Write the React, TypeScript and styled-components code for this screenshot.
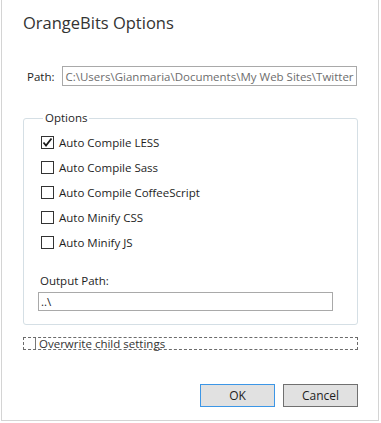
import styled, { createGlobalStyle } from "styled-components";

const GlobalStyle = createGlobalStyle`
  html, body {
    margin: 0;
    padding: 0;
    background: #ffffff;
  }
  body {
    font-family: "Open Sans", "Noto Sans", sans-serif;
    font-size: 11.5px;
    color: #1e1e1e;
  }
`;

const Window = styled.div`
  margin-left: 1px;
  width: 378px;
  height: 421px;
  box-sizing: border-box;
  border: 1px solid #d4d4d4;
  border-top: none;
  display: flex;
  flex-direction: column;
  padding: 0 20px 0 21px;
`;

const Title = styled.h1`
  margin: 11px 0 0 0;
  font-size: 16.5px;
  font-weight: 400;
  line-height: 24px;
  color: #333333;
`;

const PathRow = styled.div`
  display: flex;
  align-items: center;
  margin-top: 31px;
  padding-left: 4px;
  gap: 8px;
`;

const Label = styled.span`
  white-space: nowrap;
`;

const TextBox = styled.div<{ $width: number; $height: number; $muted?: boolean }>`
  width: ${(p) => p.$width}px;
  height: ${(p) => p.$height}px;
  box-sizing: border-box;
  border: 1px solid #a9a9a9;
  background: #ffffff;
  color: ${(p) => (p.$muted ? "#6d6d6d" : "#1e1e1e")};
  display: flex;
  align-items: center;
  padding-left: 2px;
  overflow: hidden;
  white-space: nowrap;
`;

const Group = styled.fieldset`
  margin: 25px 0 0 0;
  padding: 5px 0 13px 14px;
  width: 335px;
  box-sizing: border-box;
  border: 1px solid #d5dfe5;
  border-radius: 3px;
  display: flex;
  flex-direction: column;
`;

const Legend = styled.legend`
  margin-left: 5px;
  padding: 0 2px;
  line-height: 14px;
`;

const CheckRow = styled.label`
  display: flex;
  align-items: center;
  gap: 5px;
  height: 25px;
  padding-left: 3px;
`;

const Box = styled.span`
  width: 13px;
  height: 13px;
  box-sizing: border-box;
  border: 1px solid #333333;
  background: #ffffff;
  display: flex;
  align-items: center;
  justify-content: center;
  flex: none;
`;

const OutputLabel = styled.div`
  margin-top: 17px;
  padding-left: 2px;
  line-height: 18px;
`;

const OutputBox = styled(TextBox)`
  margin-top: 2px;
`;

const FocusRow = styled.label`
  margin-top: 12px;
  width: 335px;
  height: 13px;
  box-sizing: border-box;
  border: 1px dashed #6b6b6b;
  display: flex;
  align-items: center;
  gap: 3px;
  color: #333333;
  line-height: 11px;
`;

const SmallBox = styled.span`
  width: 12px;
  height: 11px;
  box-sizing: border-box;
  border-right: 1px solid #777777;
  background: #ffffff;
  flex: none;
`;

const Buttons = styled.div`
  margin-top: auto;
  margin-bottom: 13px;
  display: flex;
  justify-content: flex-end;
  gap: 8px;
`;

const Button = styled.button<{ $default?: boolean }>`
  width: 75px;
  height: 23px;
  box-sizing: border-box;
  font-family: inherit;
  font-size: 12px;
  color: #1e1e1e;
  background: #e1e1e1;
  border: 1px solid ${(p) => (p.$default ? "#3c96e6" : "#707070")};
  padding: 0;
`;

const Check = () => (
  <svg width="11" height="11" viewBox="0 0 11 11">
    <path d="M1.5 5.5 L4 8.5 L9.5 1.5" fill="none" stroke="#1a1a1a" strokeWidth="1.8" />
  </svg>
);

const options = [
  { label: "Auto Compile LESS", checked: true },
  { label: "Auto Compile Sass", checked: false },
  { label: "Auto Compile CoffeeScript", checked: false },
  { label: "Auto Minify CSS", checked: false },
  { label: "Auto Minify JS", checked: false },
];

export default function App() {
  return (
    <>
      <GlobalStyle />
      <Window>
        <Title>OrangeBits Options</Title>
        <PathRow>
          <Label>Path:</Label>
          <TextBox $width={295} $height={20} $muted>
            C:\Users\Gianmaria\Documents\My Web Sites\Twitter
          </TextBox>
        </PathRow>
        <Group>
          <Legend>Options</Legend>
          {options.map((o) => (
            <CheckRow key={o.label}>
              <Box>{o.checked && <Check />}</Box>
              {o.label}
            </CheckRow>
          ))}
          <OutputLabel>Output Path:</OutputLabel>
          <OutputBox $width={295} $height={19}>
            ..\
          </OutputBox>
        </Group>
        <FocusRow>
          <SmallBox />
          Overwrite child settings
        </FocusRow>
        <Buttons>
          <Button $default>OK</Button>
          <Button>Cancel</Button>
        </Buttons>
      </Window>
    </>
  );
}
